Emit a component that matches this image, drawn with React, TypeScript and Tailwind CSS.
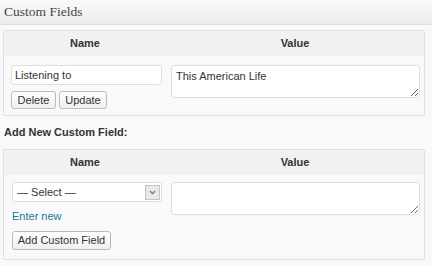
import { ChevronDown } from "lucide-react";

function HeaderRow() {
  return (
    <div className="flex h-[25px] items-center bg-[#f1f1f1] text-[11px] font-bold text-[#333]">
      <div className="w-[162px] text-center">Name</div>
      <div className="flex-1 text-center">Value</div>
    </div>
  );
}

function Button({ label, className = "" }: { label: string; className?: string }) {
  return (
    <button
      className={`whitespace-nowrap rounded-[3px] border border-[#bbb] bg-gradient-to-b from-[#fefefe] to-[#f0f0f0] text-[11px] leading-none text-[#333] ${className}`}
    >
      {label}
    </button>
  );
}

export default function App() {
  return (
    <div
      className="h-[266px] w-[432px] overflow-hidden bg-[#f9f9f9] text-[#333]"
      style={{ fontFamily: '"Liberation Sans", Arial, sans-serif' }}
    >
      <div className="flex h-[25px] items-center border-b border-[#dfdfdf] bg-gradient-to-b from-[#f9f9f9] to-[#ececec] pl-[4px]">
        <h3
          className="text-[13.5px] text-[#464646]"
          style={{ fontFamily: '"Liberation Serif", "Times New Roman", serif' }}
        >
          Custom Fields
        </h3>
      </div>

      {/* existing field */}
      <div className="mx-[3px] mt-[5px] w-[422px] rounded-[2px] border border-[#dfdfdf] bg-[#f9f9f9]">
        <HeaderRow />
        <div className="flex pb-[6px] pt-[9px]">
          <div className="w-[166px] pl-[7px]">
            <input
              defaultValue="Listening to"
              className="block h-[20px] w-[151px] rounded-[3px] border border-[#dfdfdf] bg-white px-[3px] text-[11px] text-[#333] outline-none"
            />
            <div className="mt-[6px] flex gap-[3px]">
              <Button label="Delete" className="h-[18px] w-[45px]" />
              <Button label="Update" className="h-[18px] w-[48px]" />
            </div>
          </div>
          <div className="pl-[1px]">
            <textarea
              defaultValue="This American Life"
              className="block h-[33px] w-[249px] resize-y rounded-[3px] border border-[#dfdfdf] bg-white px-[4px] py-[3px] text-[11px] leading-[14px] text-[#333] outline-none"
            />
          </div>
        </div>
      </div>

      <p className="ml-[4px] mt-[10px] text-[11px] font-bold leading-[13px] text-[#333]">
        Add New Custom Field:
      </p>

      {/* new field */}
      <div className="mx-[3px] mt-[10px] w-[422px] rounded-[2px] border border-[#dfdfdf] bg-[#f9f9f9]">
        <HeaderRow />
        <div className="flex pb-[8px] pt-[7px]">
          <div className="w-[166px] pl-[8px]">
            <div className="flex h-[20px] w-[150px] items-center justify-between rounded-[3px] border border-[#dfdfdf] bg-white pl-[4px] pr-[1px] text-[11px] text-[#333]">
              <span>— Select —</span>
              <span className="flex h-[15px] w-[15px] items-center justify-center border border-[#c4c4c4] bg-[#e8e8e8]">
                <ChevronDown size={9} strokeWidth={3} color="#666" />
              </span>
            </div>
            <div className="mt-[8px] text-[11px] leading-[13px] text-[#21759b]">Enter new</div>
            <Button label="Add Custom Field" className="mt-[8px] h-[19px] w-[99px]" />
          </div>
          <div className="pl-[1px]">
            <textarea className="block h-[33px] w-[249px] resize-y rounded-[3px] border border-[#dfdfdf] bg-white px-[4px] py-[3px] text-[11px] outline-none" />
          </div>
        </div>
      </div>
    </div>
  );
}
